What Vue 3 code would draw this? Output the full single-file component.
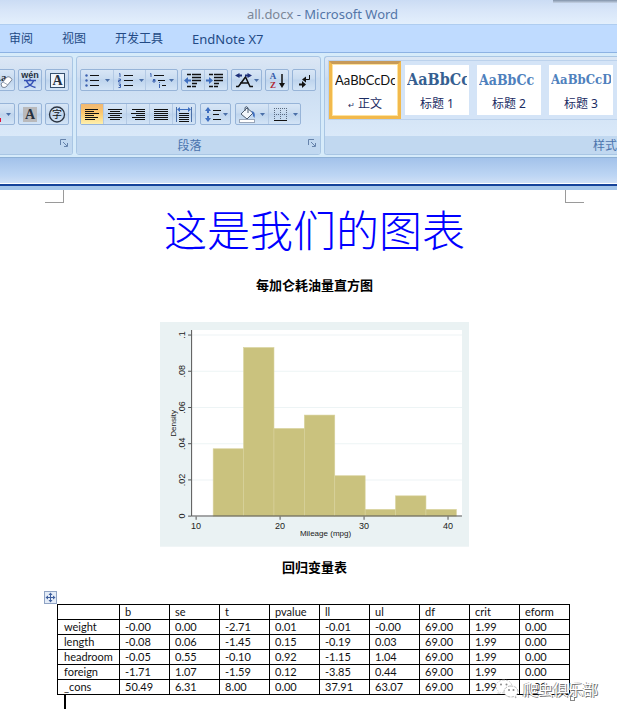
<script setup>
const tabs = [
  { label: '审阅' },
  { label: '视图' },
  { label: '开发工具' },
  { label: 'EndNote X7', latin: true }
]

const aligns = [
  { label: '左对齐', lines: [[1, 14], [1, 10], [1, 15], [1, 10], [1, 14], [1, 11]] },
  { label: '居中', lines: [[1, 15], [3, 13], [1, 15], [3, 13], [1, 15], [3, 13]] },
  { label: '右对齐', lines: [[2, 15], [6, 15], [1, 15], [6, 15], [2, 15], [5, 15]] },
  { label: '两端对齐', lines: [[1, 15], [1, 15], [1, 15], [1, 15], [1, 15], [1, 15]] }
]

const styles = [
  { sample: 'AaBbCcDc', name: '正文', kind: 'body' },
  { sample: 'AaBbCc', name: '标题 1', kind: 'h1' },
  { sample: 'AaBbCc', name: '标题 2', kind: 'h2' },
  { sample: 'AaBbCcD', name: '标题 3', kind: 'h3' }
]

const densities = [0.0372, 0.0931, 0.0484, 0.0558, 0.0223, 0.0037, 0.0112, 0.0037]
const bars = densities.map((d, i) => ({
  x: 53 + i * 30.3,
  y: 193.5 - d * 1805,
  h: d * 1805
}))
const yTicks = ['0', '.02', '.04', '.06', '.08', '.1'].map((label, i) => ({ label, y: 193.5 - i * 36.1 }))
const xTicks = [10, 20, 30, 40].map((label, i) => ({ label, x: 36 + i * 83.7 }))

const columns = ['', 'b', 'se', 't', 'pvalue', 'll', 'ul', 'df', 'crit', 'eform']
const rows = [
  ['weight', '-0.00', '0.00', '-2.71', '0.01', '-0.01', '-0.00', '69.00', '1.99', '0.00'],
  ['length', '-0.08', '0.06', '-1.45', '0.15', '-0.19', '0.03', '69.00', '1.99', '0.00'],
  ['headroom', '-0.05', '0.55', '-0.10', '0.92', '-1.15', '1.04', '69.00', '1.99', '0.00'],
  ['foreign', '-1.71', '1.07', '-1.59', '0.12', '-3.85', '0.44', '69.00', '1.99', '0.00'],
  ['_cons', '50.49', '6.31', '8.00', '0.00', '37.91', '63.07', '69.00', '1.99', '0.00']
]
</script>

<template>
  <div class="window">
    <header class="titlebar"><span class="file">all.docx</span> - Microsoft Word</header>

    <nav class="tabs">
      <button v-for="t in tabs" :key="t.label" class="tab" :class="{ latin: t.latin }">{{ t.label }}</button>
    </nav>

    <div class="ribbon">
      <section class="group font-group">
        <div class="tools">
          <div class="tool-row end">
            <div class="cluster">
              <button class="tool" aria-label="清除格式">
                <svg width="22" height="19" viewBox="0 0 22 19">
                  <text x="1" y="10" class="glyph" font-size="11">Aa</text>
                  <path d="M9 13 L15 6 Q17 5 19 7 T19 10 L14 16 Q12 17 10 16 Z" fill="#fff" stroke="#7b8799" />
                  <path d="M11 11 L16 14" stroke="#9aa6b8" />
                </svg>
              </button>
            </div>
            <div class="cluster">
              <button class="tool" aria-label="拼音指南">
                <svg width="22" height="19" viewBox="0 0 22 19">
                  <text x="11" y="7" text-anchor="middle" class="pinyin">wén</text>
                  <path d="M5 9.500H17M11 7.500V9.500M7.500 10Q10 15 16.500 16.500M14.500 10Q12 15 5.500 16.500" fill="none" stroke="#3551b5" stroke-width="1.500" />
                </svg>
              </button>
            </div>
            <div class="cluster">
              <button class="tool" aria-label="字符边框">
                <svg width="22" height="19" viewBox="0 0 22 19">
                  <rect x="4.500" y="2.500" width="14" height="14" fill="#eef5fd" stroke="#35506e" />
                  <text x="11.500" y="14" text-anchor="middle" class="glyph" font-size="14">A</text>
                </svg>
              </button>
            </div>
          </div>
          <div class="tool-row end">
            <div class="cluster">
              <button class="tool" aria-label="字体颜色">
                <svg width="22" height="19" viewBox="0 0 22 19">
                  <rect x="1" y="13" width="8" height="4" fill="#e0103a" />
                  <path d="M14 8h5l-2.500 3z" fill="#4a6fa8" />
                </svg>
              </button>
            </div>
            <div class="cluster">
              <button class="tool" aria-label="字符底纹">
                <svg width="22" height="19" viewBox="0 0 22 19">
                  <rect x="4" y="2" width="14" height="15" fill="#b9b9bb" />
                  <text x="11" y="14" text-anchor="middle" class="glyph" font-size="14">A</text>
                </svg>
              </button>
            </div>
            <div class="cluster">
              <button class="tool" aria-label="带圈字符">
                <svg width="22" height="19" viewBox="0 0 22 19">
                  <circle cx="11" cy="9.500" r="7.500" fill="none" stroke="#2b3442" stroke-width="1.300" />
                  <text x="11" y="13" text-anchor="middle" class="ring">字</text>
                </svg>
              </button>
            </div>
          </div>
        </div>
        <footer class="caption">
          <button class="launcher" aria-label="字体选项">
            <svg width="8" height="8" viewBox="0 0 8 8"><path d="M.5 6V.5H6M3 3l4 4M7.500 4v3.500H4" fill="none" stroke="#6683ab" /></svg>
          </button>
        </footer>
      </section>

      <section class="group para-group">
        <div class="tools">
          <div class="tool-row">
            <div class="cluster">
              <button class="tool list" aria-label="项目符号">
                <svg width="32" height="19" viewBox="0 0 32 19">
                  <path d="M9 4.500h9M9 9.500h9M9 14.500h9" stroke="#111" />
                  <g fill="#3d62b0"><circle cx="5.500" cy="4.500" r="1.200" /><circle cx="5.500" cy="9.500" r="1.200" /><circle cx="5.500" cy="14.500" r="1.200" /></g>
                  <path d="M24 8h5l-2.500 3z" fill="#4a6fa8" />
                </svg>
              </button>
              <button class="tool list" aria-label="编号">
                <svg width="32" height="19" viewBox="0 0 32 19">
                  <path d="M10 4.500h9M10 9.500h9M10 14.500h9" stroke="#111" />
                  <path d="M5 3l1-.5V6M4.500 8h2v1.500h-2V11h2M4.500 13h2v3.500h-2M5 14.500h1.500" fill="none" stroke="#3d62b0" />
                  <path d="M25 8h5l-2.500 3z" fill="#4a6fa8" />
                </svg>
              </button>
              <button class="tool list" aria-label="多级列表">
                <svg width="32" height="19" viewBox="0 0 32 19">
                  <path d="M8 4.500h10M12 9.500h7M16 14.500h4" stroke="#111" />
                  <path d="M4 3l1-.5V6M7 8.500h2V11H7V9.500h2M13.500 13v4M13.500 11v1" fill="none" stroke="#3d62b0" />
                  <path d="M23 8h5l-2.500 3z" fill="#4a6fa8" />
                </svg>
              </button>
            </div>
            <div class="cluster">
              <button class="tool" aria-label="减少缩进量">
                <svg width="22" height="19" viewBox="0 0 22 19">
                  <path d="M5 3.500h4M10 3.500h9M10 6.500h9M10 9.500h9M10 12.500h5M5 15.500h4M10 15.500h4" stroke="#111" stroke-width="1.600" />
                  <path d="M2 9.500l4-3.500v2.500h3v2H6V13z" fill="#3f6fc0" />
                </svg>
              </button>
              <button class="tool" aria-label="增加缩进量">
                <svg width="22" height="19" viewBox="0 0 22 19">
                  <path d="M4 3.500h4M9 3.500h9M9 6.500h9M9 9.500h9M9 12.500h5M4 15.500h4M9 15.500h4" stroke="#111" stroke-width="1.600" />
                  <path d="M8 9.500L4 6v2.500H1v2h3V13z" fill="#3f6fc0" />
                </svg>
              </button>
            </div>
            <div class="cluster">
              <button class="tool wide" aria-label="中文版式">
                <svg width="28" height="19" viewBox="0 0 28 19">
                  <path d="M3 15.500H5.500L12.500 6L17 15.500H20M7 12h9" fill="none" stroke="#111" stroke-width="1.500" />
                  <path d="M6.500 2L2 4.500L6.500 7V5.500H9v-2H6.500zM14.500 2L19 4.500L14.500 7V5.500H12v-2h2.500z" fill="#1d2f78" />
                  <path d="M21 8h5l-2.500 3z" fill="#4a6fa8" />
                </svg>
              </button>
            </div>
            <div class="cluster">
              <button class="tool" aria-label="排序">
                <svg width="22" height="19" viewBox="0 0 22 19">
                  <text x="7" y="8" text-anchor="middle" class="sort-a">A</text>
                  <text x="7" y="17" text-anchor="middle" class="sort-z">Z</text>
                  <path d="M16 3v12" stroke="#111" stroke-width="1.500" /><path d="M13 12h6l-3 5z" fill="#111" />
                </svg>
              </button>
            </div>
            <div class="cluster">
              <button class="tool" aria-label="显示编辑标记">
                <svg width="22" height="19" viewBox="0 0 22 19">
                  <path d="M16.500 4v4.500H11" fill="none" stroke="#111" /><path d="M9 8.500l4-3v6z" fill="#111" />
                  <path d="M6 13.500h5" stroke="#111" stroke-width="2" /><path d="M13 13.500l-4-3.500v7z" fill="#111" />
                </svg>
              </button>
            </div>
          </div>
          <div class="tool-row roomy">
            <div class="cluster">
              <button v-for="(a, i) in aligns" :key="a.label" class="tool" :class="{ on: i === 0 }" :aria-label="a.label">
                <svg width="16" height="19" viewBox="0 0 16 19">
                  <path v-for="(l, j) in a.lines" :key="j" :d="`M${l[0]} ${4.5 + j * 2}H${l[1]}`" stroke="#111" stroke-width="1" />
                </svg>
              </button>
              <button class="tool" aria-label="分散对齐">
                <svg width="18" height="19" viewBox="0 0 18 19">
                  <path d="M1.500 2v15M16.500 2v15" stroke="#4a6fa8" />
                  <path d="M2 4.500l3-2.500v2h8V2l3 2.500L13 7V5H5v2z" fill="#3f6fc0" />
                  <path d="M4 8.500h10M4 10.500h10M4 12.500h10M4 14.500h10M4 16.500h10" stroke="#111" />
                </svg>
              </button>
            </div>
            <div class="cluster">
              <button class="tool wide" aria-label="行距">
                <svg width="28" height="19" viewBox="0 0 28 19">
                  <path d="M6 2L3 6h2v2h2V6h2zM6 17l-3-4h2v-2h2v2h2z" fill="#3f6fc0" />
                  <path d="M11 5.500h8M11 9.500h6M11 14.500h8" stroke="#111" />
                  <path d="M21 8h5l-2.500 3z" fill="#4a6fa8" />
                </svg>
              </button>
            </div>
            <div class="cluster">
              <button class="tool list" aria-label="底纹">
                <svg width="32" height="19" viewBox="0 0 32 19">
                  <path d="M5 9L11 3l6 5-6 6z" fill="#f3f7fc" stroke="#4d5c70" /><path d="M9 6V2.500Q11 .5 12 3v5" fill="none" stroke="#4d5c70" />
                  <path d="M15 6q5 0 3.500 7q-2-2-2-5z" fill="#3f6fc0" />
                  <rect x="3.500" y="14.500" width="15" height="3" fill="#fff" stroke="#9aa6b8" />
                  <path d="M24 8h5l-2.500 3z" fill="#4a6fa8" />
                </svg>
              </button>
              <button class="tool list" aria-label="边框">
                <svg width="32" height="19" viewBox="0 0 32 19">
                  <path d="M5 3.500h13M5 9.500h13M5.500 3v12M11.500 3v12M17.500 3v12" stroke="#5a6a80" stroke-dasharray="1 1" />
                  <path d="M5 15.500h13" stroke="#111" />
                  <path d="M24 8h5l-2.500 3z" fill="#4a6fa8" />
                </svg>
              </button>
            </div>
          </div>
        </div>
        <footer class="caption">段落
          <button class="launcher" aria-label="段落选项">
            <svg width="8" height="8" viewBox="0 0 8 8"><path d="M.5 6V.5H6M3 3l4 4M7.500 4v3.500H4" fill="none" stroke="#6683ab" /></svg>
          </button>
        </footer>
      </section>

      <section class="group style-group">
        <div class="gallery">
          <button v-for="(s, i) in styles" :key="s.name" class="style" :class="[s.kind, { chosen: i === 0 }]">
            <span class="sample">{{ s.sample }}</span>
            <span class="style-name"><small v-if="i === 0">↵</small> {{ s.name }}</span>
          </button>
        </div>
        <footer class="caption style-caption">样式</footer>
      </section>
    </div>

    <div class="understrip"></div>

    <main class="page">
      <div class="crops"><i class="crop left"></i><i class="crop right"></i></div>
      <h1>这是我们的图表</h1>
      <h2 class="chart-title">每加仑耗油量直方图</h2>

      <svg class="chart" viewBox="0 0 308 224" role="img" aria-label="Mileage (mpg)">
        <rect width="308" height="224" fill="#eaf2f3" />
        <rect x="31" y="8" width="270" height="186" fill="#fff" />
        <path v-for="t in yTicks" :key="t.label" :d="`M31 ${t.y}H301`" stroke="#edf4f5" />
        <rect v-for="(b, i) in bars" :key="i" :x="b.x" :y="b.y" width="30.300" :height="b.h" fill="#cac27e" stroke="#d8d29c" stroke-width=".6" />
        <path d="M31.500 8V193.500H301" fill="none" stroke="#555" />
        <g v-for="t in yTicks" :key="'y' + t.label">
          <path :d="`M28 ${t.y}h3`" stroke="#555" />
          <text class="tick" :transform="`translate(25 ${t.y}) rotate(-90)`" text-anchor="middle">{{ t.label }}</text>
        </g>
        <g v-for="t in xTicks" :key="'x' + t.label">
          <path :d="`M${t.x} 194v3`" stroke="#555" />
          <text class="tick" :x="t.x" y="206" text-anchor="middle">{{ t.label }}</text>
        </g>
        <text transform="translate(16 101) rotate(-90)" text-anchor="middle">Density</text>
        <text x="165" y="213" text-anchor="middle">Mileage (mpg)</text>
      </svg>

      <h2 class="table-title">回归变量表</h2>

      <div class="table-box">
        <svg class="move" width="13" height="13" viewBox="0 0 13 13">
          <rect x=".5" y=".5" width="12" height="12" fill="#e4ecf7" stroke="#8fa3c4" />
          <path d="M6.500 3v7M3 6.500h7" stroke="#3f5f9e" />
          <path d="M6.500 1.500L4.500 4h4zM6.500 11.500L4.500 9h4zM1.500 6.500L4 4.500v4zM11.500 6.500L9 4.500v4z" fill="#3f5f9e" />
        </svg>
        <table>
          <thead>
            <tr><th v-for="c in columns" :key="c" scope="col">{{ c }}</th></tr>
          </thead>
          <tbody>
            <tr v-for="r in rows" :key="r[0]">
              <th scope="row">{{ r[0] }}</th>
              <td v-for="(v, i) in r.slice(1)" :key="i">{{ v }}</td>
            </tr>
          </tbody>
        </table>
        <i class="resize"></i>
        <div class="watermark">
          <svg width="24" height="20" viewBox="0 0 24 20">
            <path d="M9 1C4 1 1 4 1 7.500c0 2 1 3.500 2.500 4.700L3 15l3-1.500c1 .3 2 .5 3 .5 5 0 8-3 8-6.500S14 1 9 1z" fill="#fff" stroke="#bbb" stroke-width=".7" stroke-dasharray="2 1" />
            <path d="M16 7c-4 0-7 2.500-7 5.500S12 18 16 18c1 0 2-.2 2.800-.4L21 19l-.5-2.200C22 15.700 23 14.300 23 12.500 23 9.500 20 7 16 7z" fill="#fff" stroke="#999" stroke-width=".7" stroke-dasharray="3 1" />
            <g fill="#888"><circle cx="6" cy="5.500" r="1" /><circle cx="11.500" cy="5.500" r="1" /><circle cx="14" cy="11" r="1" /><circle cx="18.500" cy="11" r="1" /></g>
          </svg>
          <span>爬虫俱乐部</span>
        </div>
      </div>
      <div class="caret"></div>
    </main>
  </div>
</template>

<style>
body {
  margin: 0;
  background: #fff;
}
</style>

<style scoped>
.window {
  font-family: "Noto Sans", "Noto Sans CJK SC", sans-serif;
  font-size: 12px;
  overflow: hidden;
}
* {
  box-sizing: border-box;
}
button {
  font: inherit;
  color: inherit;
  padding: 0;
  margin: 0;
  border: 0;
  background: none;
}
svg {
  display: block;
  flex: none;
}

.titlebar {
  position: relative;
  height: 25px;
  padding: 4px 0 0 28px;
  font-size: 13px;
  line-height: 20px;
  text-align: center;
  color: #5476a8;
  background: linear-gradient(#cbdcf4, #d7e5f8 40%, #e3effc);
  border-bottom: 1px solid #afcdf0;
}
.titlebar::after {
  content: "";
  position: absolute;
  top: 0;
  right: 0;
  width: 64px;
  height: 3px;
  background: linear-gradient(#8192a8, #c7d4e6);
}
.file {
  color: #7c8798;
}

.tabs {
  display: flex;
  gap: 29px;
  height: 28px;
  padding-left: 9px;
  color: #234a85;
  background: #bfdbff;
  border-bottom: 1px solid #8db2e3;
}
.tab {
  line-height: 28px;
}
.latin {
  font-size: 13px;
}

.ribbon {
  display: flex;
  gap: 3px;
  height: 105px;
  padding: 3px 0 2px;
  background: #d6ebfa;
  border-bottom: 1px solid #8fb1d6;
  overflow: hidden;
}
.group {
  display: flex;
  flex-direction: column;
  justify-content: space-between;
  border: 1px solid #a9c6e4;
  border-radius: 3px;
  background: linear-gradient(#dce7f5, #cfdff2 20%, #c9dcf1 22%, #dae9f9 82%);
  overflow: hidden;
}
.font-group {
  flex: none;
  width: 73px;
  border-left: 0;
  border-radius: 0 3px 3px 0;
}
.para-group {
  flex: none;
  width: 245px;
}
.style-group {
  flex: 1;
  min-width: 0;
  border-right: 0;
  border-radius: 3px 0 0 3px;
}
.tools {
  display: flex;
  flex-direction: column;
  gap: 12px;
  padding: 12px 3px 0;
}
.tool-row {
  display: flex;
  gap: 3px;
}
.roomy {
  gap: 4px;
}
.end {
  justify-content: flex-end;
}
.cluster {
  display: flex;
  flex: none;
  border: 1px solid #97b4d8;
  border-radius: 2px;
  background: linear-gradient(#d8e6f6, #c8dbf0 45%, #bed4ed 50%, #d3e4f6);
}
.tool {
  display: flex;
  align-items: center;
  justify-content: center;
  width: 22px;
  height: 20px;
}
.tool + .tool {
  border-left: 1px solid #b4cae5;
  width: 23px;
}
.wide {
  width: 29px;
}
.tool.list {
  width: 32px;
}
.on {
  background: linear-gradient(#f0b772, #fbc56c 40%, #fddb86 70%, #fef0ae);
}
.glyph {
  font-family: "Liberation Serif", serif;
  font-weight: bold;
  fill: #26303e;
}
.pinyin {
  font: bold 9px "Liberation Sans", sans-serif;
  fill: #26303e;
}
.ring {
  font: 10px "Noto Sans CJK SC", sans-serif;
  fill: #111;
}
.sort-a,
.sort-z {
  font: bold 9px/9px "Liberation Serif", serif;
  fill: #3358a8;
}
.sort-z {
  fill: #b02a35;
}
.caption {
  position: relative;
  flex: none;
  height: 18px;
  line-height: 20px;
  text-align: center;
  padding-right: 18px;
  color: #4b74ad;
  background: #c1d8f0;
}
.launcher {
  position: absolute;
  right: 4px;
  top: 3px;
}
.style-caption {
  padding: 0;
  text-align: right;
}

.gallery {
  display: flex;
  margin: 3px 0 0 3px;
  height: 60px;
  border: 1px solid #bcd2ec;
  border-right: 0;
  background: #d4e4f7;
  overflow: hidden;
}
.style {
  flex: none;
  width: 72px;
  padding: 1px 2px;
  border: 4px solid #d4e4f7;
  background: #fff;
  overflow: hidden;
}
.chosen {
  padding: 2px 3px;
  border: 3px solid #f2b94c;
  border-top-color: #c79a58;
  box-shadow: inset 0 0 0 1px #fde3a0;
}
.sample,
.style-name {
  display: block;
  overflow: hidden;
  white-space: nowrap;
}
.sample {
  height: 26px;
  line-height: 28px;
  text-align: left;
  font-family: Lato, sans-serif;
  font-size: 13px;
  color: #111;
}
.style-name {
  line-height: 24px;
  color: #1b2c63;
  text-align: center;
}
.style-name small {
  font-size: 8px;
}
.h1 .sample,
.h2 .sample,
.h3 .sample {
  font-family: "DejaVu Serif Condensed", "DejaVu Serif", serif;
  font-weight: bold;
  color: #4f81bd;
}
.h1 .sample {
  font-size: 16px;
  color: #365f91;
}
.h2 .sample {
  font-size: 14px;
}
.h3 .sample {
  font-size: 13px;
}

.understrip {
  height: 32px;
  background: linear-gradient(#a3c2ea 0, #bed6f4 18px, #d0e0f6 25px, #fff 25px, #fff 26px, #16439a 26px, #16439a 28px, #a5c6ea 28px);
}

.page {
  padding: 0 33px 5px 45px;
  background: #fff;
}
.crops {
  display: flex;
  justify-content: space-between;
}
.crop {
  width: 19px;
  height: 13px;
  border-bottom: 1px solid #9a9a9a;
}
.left {
  border-right: 1px solid #9a9a9a;
}
.right {
  border-left: 1px solid #9a9a9a;
}
h1,
h2 {
  margin: 0;
  text-align: center;
}
h1 {
  font: 200 43px/50px "Noto Sans CJK SC", sans-serif;
  color: #00f;
}
h2 {
  font: bold 13px/20px "Noto Sans CJK SC", sans-serif;
  color: #000;
}
.chart-title {
  margin-top: 22px;
}
.chart {
  width: 309px;
  max-width: 100%;
  margin: 27px auto 0;
}
.chart text {
  font: 8px "Liberation Sans", sans-serif;
  fill: #222;
}
.chart .tick {
  font-size: 9px;
}
.table-title {
  margin-top: 10px;
}
.table-box {
  position: relative;
  margin: 27px 14px 0 12px;
}
.move {
  position: absolute;
  left: -13px;
  top: -13px;
}
table {
  width: 100%;
  table-layout: fixed;
  border-collapse: collapse;
  font: 11px/14px Lato, sans-serif;
  color: #111;
}
th,
td {
  height: 15px;
  padding: 0 0 0 5px;
  border: 1px solid #000;
  font-weight: normal;
  text-align: left;
}
th:first-child {
  width: 62px;
  padding-left: 6px;
}
.resize {
  position: absolute;
  right: -5px;
  bottom: -6px;
  width: 5px;
  height: 5px;
  border: 1px solid #888;
}
.watermark {
  position: absolute;
  right: -28px;
  bottom: -4px;
  display: flex;
  align-items: center;
  gap: 4px;
  font: 15px/20px "Noto Sans CJK SC", sans-serif;
  color: #fff;
  text-shadow: 1px 1px 0 #777, -1px 0 0 #999;
}
.caret {
  width: 2px;
  height: 14px;
  margin-left: 19px;
  background: #000;
}
</style>
